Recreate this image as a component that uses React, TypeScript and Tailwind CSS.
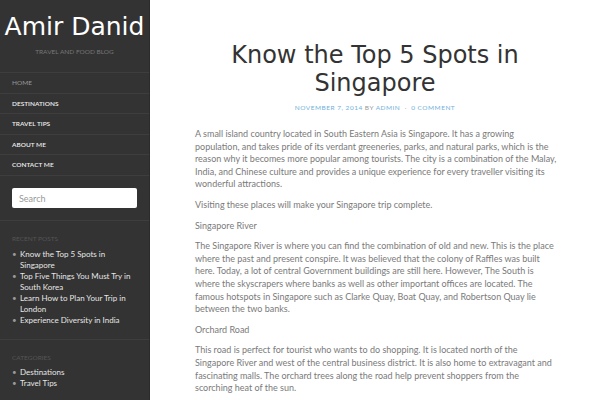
const navItems = ['Home', 'Destinations', 'Travel Tips', 'About Me', 'Contact Me']

const recentPosts = [
  'Know the Top 5 Spots in Singapore',
  'Top Five Things You Must Try in South Korea',
  'Learn How to Plan Your Trip in London',
  'Experience Diversity in India',
]

const categories = ['Destinations', 'Travel Tips']

function Sidebar() {
  return (
    <aside className="flex h-full w-[150px] shrink-0 flex-col border-r border-[#2b2b2b] bg-[#333333] font-['Lato',sans-serif]">
      <div className="border-b border-[#3e3e3e] pt-[12px] pb-[15px] text-center">
        <div className="font-['DejaVu_Sans',sans-serif] text-[25px] leading-[30px] text-white">Amir Danid</div>
        <div className="mt-[5px] text-[6.5px] leading-[10px] uppercase text-[#777]">Travel and Food Blog</div>
      </div>
      <nav className="flex flex-col">
        {navItems.map((item, i) => (
          <a
            key={item}
            className={`border-b border-[#3e3e3e] px-[12px] text-[6.5px] leading-[19.6px] uppercase ${
              i === 0 ? 'text-[#999]' : 'font-semibold text-[#eee]'
            }`}
          >
            {item}
          </a>
        ))}
      </nav>
      <div className="border-b border-[#3e3e3e] px-[12px] pt-[12.5px] pb-[12px]">
        <div className="flex h-[20px] items-center rounded-[2px] bg-white px-[7px] text-[9px] text-[#999]">Search</div>
      </div>
      <div className="border-b border-[#3e3e3e] px-[12px] pt-[13px] pb-[13.5px]">
        <div className="text-[6.5px] leading-[10px] uppercase text-[#555]">Recent Posts</div>
        <ul className="mt-[4.5px] flex flex-col">
          {recentPosts.map((p) => (
            <li key={p} className="flex text-[8px] leading-[11px] text-[#e6e6e6]">
              <span className="w-[8px] shrink-0 text-[#999]">•</span>
              <span className="max-w-[114px]">{p}</span>
            </li>
          ))}
        </ul>
      </div>
      <div className="px-[12px] pt-[13px]">
        <div className="text-[6.5px] leading-[10px] uppercase text-[#555]">Categories</div>
        <ul className="mt-[3.5px] flex flex-col">
          {categories.map((c) => (
            <li key={c} className="flex text-[8px] leading-[11px] text-[#e6e6e6]">
              <span className="w-[8px] shrink-0 text-[#999]">•</span>
              <span>{c}</span>
            </li>
          ))}
        </ul>
      </div>
    </aside>
  )
}

function Article() {
  return (
    <main className="h-full flex-1 overflow-hidden bg-white pt-[41px] font-['Lato',sans-serif]">
      <h1 className="px-[50px] text-center font-['DejaVu_Sans',sans-serif] text-[24px] leading-[28px] text-[#333]">
        Know the Top 5 Spots in Singapore
      </h1>
      <div className="mt-[6px] text-center text-[6.5px] leading-[10px] uppercase tracking-[0.5px]">
        <span className="text-[#6fb0dc]">November 7, 2014</span>
        <span className="text-[#999]"> by </span>
        <span className="text-[#6fb0dc]">admin</span>
        <span className="text-[#bbb]"> &nbsp;·&nbsp; </span>
        <span className="text-[#6fb0dc]">0 Comment</span>
      </div>
      <div className="mt-[15px] w-[362px] ml-[45px] text-[9px] leading-[12.6px] text-[#7a7a7a]">
        <p className="mb-[8px]">
          A small island country located in South Eastern Asia is Singapore. It has a growing population, and takes
          pride of its verdant greeneries, parks, and natural parks, which is the reason why it becomes more popular
          among tourists. The city is a combination of the Malay, India, and Chinese culture and provides a unique
          experience for every traveller visiting its wonderful attractions.
        </p>
        <p className="mb-[8px]">Visiting these places will make your Singapore trip complete.</p>
        <p className="mb-[8px]">Singapore River</p>
        <p className="mb-[8px]">
          The Singapore River is where you can find the combination of old and new. This is the place where the past
          and present conspire. It was believed that the colony of Raffles was built here. Today, a lot of central
          Government buildings are still here. However, The South is where the skyscrapers where banks as well as
          other important offices are located. The famous hotspots in Singapore such as Clarke Quay, Boat Quay, and
          Robertson Quay lie between the two banks.
        </p>
        <p className="mb-[8px]">Orchard Road</p>
        <p className="mb-[8px]">
          This road is perfect for tourist who wants to do shopping. It is located north of the Singapore River and
          west of the central business district. It is also home to extravagant and fascinating malls. The orchard
          trees along the road help prevent shoppers from the scorching heat of the sun.
        </p>
      </div>
    </main>
  )
}

export default function App() {
  return (
    <div className="flex h-[400px] w-[600px] overflow-hidden">
      <Sidebar />
      <Article />
    </div>
  )
}
